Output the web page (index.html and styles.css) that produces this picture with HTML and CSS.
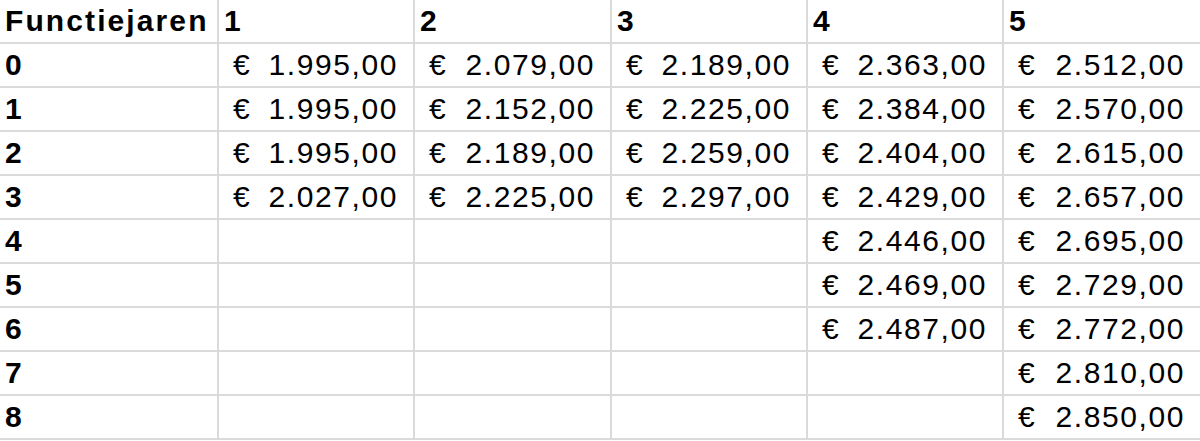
FILE: index.html
```html
<!DOCTYPE html>
<html lang="nl">
<head>
<meta charset="utf-8">
<title>Functiejaren</title>
<link rel="stylesheet" href="styles.css">
</head>
<body>
<div class="sheet">
  <div class="cell head label">Functiejaren</div>
  <div class="cell head">1</div>
  <div class="cell head">2</div>
  <div class="cell head">3</div>
  <div class="cell head">4</div>
  <div class="cell head">5</div>

  <div class="cell head">0</div>
  <div class="cell price"><span>€</span><span class="amt">1.995,00</span></div>
  <div class="cell price"><span>€</span><span class="amt">2.079,00</span></div>
  <div class="cell price"><span>€</span><span class="amt">2.189,00</span></div>
  <div class="cell price"><span>€</span><span class="amt">2.363,00</span></div>
  <div class="cell price"><span>€</span><span class="amt">2.512,00</span></div>

  <div class="cell head">1</div>
  <div class="cell price"><span>€</span><span class="amt">1.995,00</span></div>
  <div class="cell price"><span>€</span><span class="amt">2.152,00</span></div>
  <div class="cell price"><span>€</span><span class="amt">2.225,00</span></div>
  <div class="cell price"><span>€</span><span class="amt">2.384,00</span></div>
  <div class="cell price"><span>€</span><span class="amt">2.570,00</span></div>

  <div class="cell head">2</div>
  <div class="cell price"><span>€</span><span class="amt">1.995,00</span></div>
  <div class="cell price"><span>€</span><span class="amt">2.189,00</span></div>
  <div class="cell price"><span>€</span><span class="amt">2.259,00</span></div>
  <div class="cell price"><span>€</span><span class="amt">2.404,00</span></div>
  <div class="cell price"><span>€</span><span class="amt">2.615,00</span></div>

  <div class="cell head">3</div>
  <div class="cell price"><span>€</span><span class="amt">2.027,00</span></div>
  <div class="cell price"><span>€</span><span class="amt">2.225,00</span></div>
  <div class="cell price"><span>€</span><span class="amt">2.297,00</span></div>
  <div class="cell price"><span>€</span><span class="amt">2.429,00</span></div>
  <div class="cell price"><span>€</span><span class="amt">2.657,00</span></div>

  <div class="cell head">4</div>
  <div class="cell"></div>
  <div class="cell"></div>
  <div class="cell"></div>
  <div class="cell price"><span>€</span><span class="amt">2.446,00</span></div>
  <div class="cell price"><span>€</span><span class="amt">2.695,00</span></div>

  <div class="cell head">5</div>
  <div class="cell"></div>
  <div class="cell"></div>
  <div class="cell"></div>
  <div class="cell price"><span>€</span><span class="amt">2.469,00</span></div>
  <div class="cell price"><span>€</span><span class="amt">2.729,00</span></div>

  <div class="cell head">6</div>
  <div class="cell"></div>
  <div class="cell"></div>
  <div class="cell"></div>
  <div class="cell price"><span>€</span><span class="amt">2.487,00</span></div>
  <div class="cell price"><span>€</span><span class="amt">2.772,00</span></div>

  <div class="cell head">7</div>
  <div class="cell"></div>
  <div class="cell"></div>
  <div class="cell"></div>
  <div class="cell"></div>
  <div class="cell price"><span>€</span><span class="amt">2.810,00</span></div>

  <div class="cell head">8</div>
  <div class="cell"></div>
  <div class="cell"></div>
  <div class="cell"></div>
  <div class="cell"></div>
  <div class="cell price"><span>€</span><span class="amt">2.850,00</span></div>
</div>
</body>
</html>
```
FILE: styles.css
```css
html, body {
  margin: 0;
  padding: 0;
  background: #ffffff;
}

body {
  font-family: "Liberation Sans", Arial, sans-serif;
  color: #000000;
  overflow: hidden;
}

.sheet {
  display: grid;
  grid-template-columns: 219px 196px 197px 196px 196px 198px;
  grid-auto-rows: 44px;
  width: 1202px;
}

.cell {
  box-sizing: border-box;
  border-right: 2px solid #dadada;
  border-bottom: 2px solid #dadada;
  display: flex;
  align-items: flex-end;
  padding: 0 5px 6px 5px;
  font-size: 30px;
  line-height: 30px;
  white-space: nowrap;
}

.head {
  font-weight: bold;
}

.label {
  letter-spacing: 2.1px;
}

.price {
  justify-content: space-between;
  padding-left: 14px;
  padding-right: 15px;
}

.amt {
  letter-spacing: 1.6px;
}
```
